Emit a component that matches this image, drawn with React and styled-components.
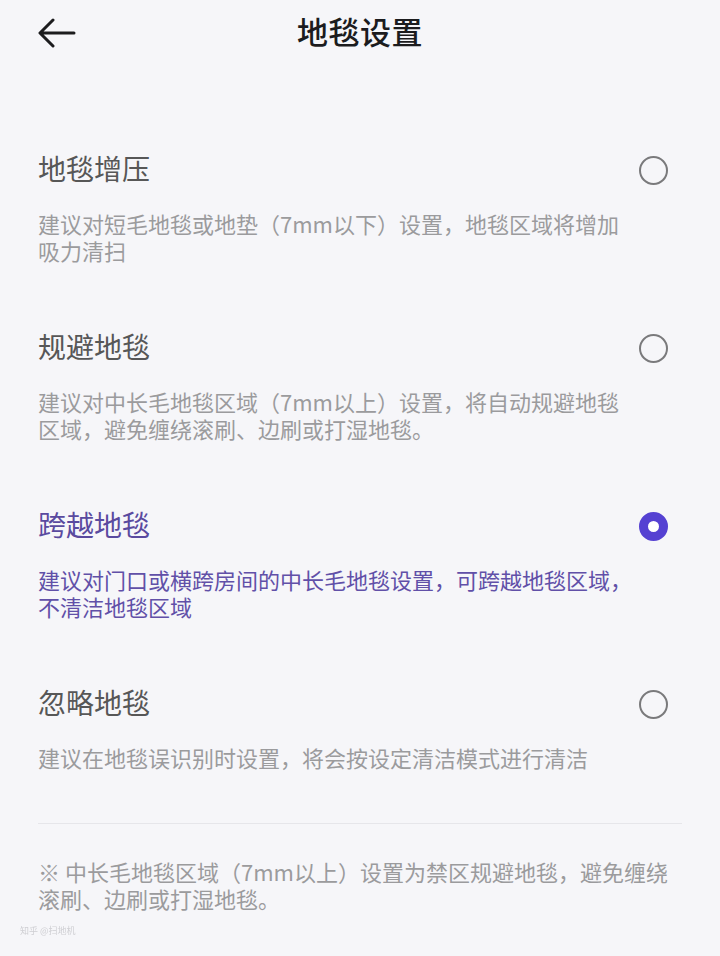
import React, { useState } from "react";
import styled, { createGlobalStyle } from "styled-components";

const GlobalStyle = createGlobalStyle`
  html, body {
    margin: 0;
    padding: 0;
    background: #f6f6f9;
  }
  body {
    font-family: "Noto Sans CJK SC", "Noto Sans", sans-serif;
  }
`;

const Page = styled.div`
  width: 720px;
  min-height: 956px;
  background: #f6f6f9;
  display: flex;
  flex-direction: column;
`;

const Header = styled.header`
  height: 66px;
  display: grid;
  grid-template-columns: 100px 1fr 100px;
  align-items: center;
`;

const BackButton = styled.button`
  border: none;
  background: none;
  padding: 0 0 0 38px;
  height: 40px;
  display: flex;
  align-items: center;
  cursor: pointer;
`;

const Title = styled.h1`
  margin: 0 0 6px;
  text-align: center;
  font-size: 31px;
  font-weight: 500;
  color: #1c1c1e;
  letter-spacing: 0.5px;
`;

const List = styled.div`
  display: flex;
  flex-direction: column;
  gap: 64px;
  padding: 84px 52px 0 38px;
`;

const Option = styled.div`
  display: flex;
  flex-direction: column;
  cursor: pointer;
`;

const OptionHead = styled.div`
  display: flex;
  align-items: center;
  justify-content: space-between;
  height: 36px;
`;

const OptionName = styled.div`
  font-size: 28px;
  line-height: 36px;
  color: ${(p) => (p.$active ? "#5a4a9f" : "#575757")};
`;

const Radio = styled.span`
  width: 29px;
  height: 29px;
  box-sizing: border-box;
  border-radius: 50%;
  margin-top: 4px;
  border: ${(p) => (p.$on ? "9px solid #5541d2" : "2.5px solid #7a7a7c")};
  background: ${(p) => (p.$on ? "#fff" : "transparent")};
`;

const OptionDesc = styled.p`
  margin: 24px 0 0;
  width: 596px;
  font-size: 22px;
  line-height: 27px;
  color: ${(p) => (p.$active ? "#6150a8" : "#9b9b9d")};
`;

const Divider = styled.hr`
  margin: 52px 38px 0 38px;
  border: none;
  border-top: 1px solid #e6e6ea;
`;

const Note = styled.p`
  margin: 34px 0 0 38px;
  width: 640px;
  font-size: 22px;
  line-height: 27px;
  color: #9b9b9d;
`;

const Watermark = styled.div`
  margin: 12px 0 0 20px;
  font-size: 9px;
  color: #cfcfd3;
  filter: blur(0.6px);
`;

const options = [
  {
    key: "boost",
    name: "地毯增压",
    desc: "建议对短毛地毯或地垫（7mm以下）设置，地毯区域将增加吸力清扫",
  },
  {
    key: "avoid",
    name: "规避地毯",
    desc: "建议对中长毛地毯区域（7mm以上）设置，将自动规避地毯区域，避免缠绕滚刷、边刷或打湿地毯。",
  },
  {
    key: "cross",
    name: "跨越地毯",
    desc: "建议对门口或横跨房间的中长毛地毯设置，可跨越地毯区域，不清洁地毯区域",
  },
  {
    key: "ignore",
    name: "忽略地毯",
    desc: "建议在地毯误识别时设置，将会按设定清洁模式进行清洁",
  },
];

function BackArrow() {
  return (
    <svg width="38" height="30" viewBox="0 0 38 30" fill="none">
      <path
        d="M36 15H3M15 2L2 15l13 13"
        stroke="#1c1c1e"
        strokeWidth="3"
        strokeLinecap="round"
        strokeLinejoin="round"
      />
    </svg>
  );
}

export default function App() {
  const [mode, setMode] = useState("cross");

  return (
    <Page>
      <GlobalStyle />
      <Header>
        <BackButton aria-label="返回">
          <BackArrow />
        </BackButton>
        <Title>地毯设置</Title>
        <span />
      </Header>
      <List>
        {options.map((o) => {
          const active = o.key === mode;
          return (
            <Option key={o.key} onClick={() => setMode(o.key)}>
              <OptionHead>
                <OptionName $active={active}>{o.name}</OptionName>
                <Radio $on={active} />
              </OptionHead>
              <OptionDesc $active={active}>{o.desc}</OptionDesc>
            </Option>
          );
        })}
      </List>
      <Divider />
      <Note>※ 中长毛地毯区域（7mm以上）设置为禁区规避地毯，避免缠绕滚刷、边刷或打湿地毯。</Note>
      <Watermark>知乎 @扫地机</Watermark>
    </Page>
  );
}
